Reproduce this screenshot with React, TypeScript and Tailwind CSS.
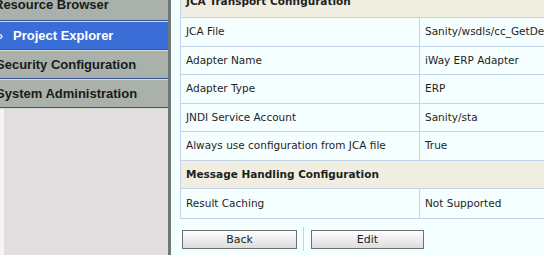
import React from "react";

const font = { fontFamily: '"DejaVu Sans", Verdana, sans-serif' };
const navFont = { fontFamily: '"Liberation Sans", Arial, sans-serif' };

function NavItem({
  label,
  active,
  h,
  offset,
  arrow,
}: {
  label: string;
  active?: boolean;
  h: string;
  offset: string;
  arrow?: boolean;
}) {
  return (
    <>
      <div
        className={`${h} flex items-center whitespace-nowrap font-bold text-[13px] ${
          active ? "bg-[#3b6dd6] text-white" : "bg-[#a9b1aa] text-[#1a1a1a]"
        }`}
        style={navFont}
      >
        {arrow && <span className="ml-[-1px] text-[12px] text-[#dfe8ff]">›</span>}
        <span className={offset}>{label}</span>
      </div>
      <div className="h-px bg-[#3a5594]" />
      <div className="h-px bg-[#d6dcdc]" />
    </>
  );
}

const rows: { k: string; v?: string; header?: boolean; h: string }[] = [
  { k: "JCA File", v: "Sanity/wsdls/cc_GetDetails", h: "h-[29px]" },
  { k: "Adapter Name", v: "iWay ERP Adapter", h: "h-[28px]" },
  { k: "Adapter Type", v: "ERP", h: "h-[29px]" },
  { k: "JNDI Service Account", v: "Sanity/sta", h: "h-[28px]" },
  { k: "Always use configuration from JCA file", v: "True", h: "h-[29px]" },
  { k: "Message Handling Configuration", header: true, h: "h-[28px]" },
  { k: "Result Caching", v: "Not Supported", h: "h-[29px]" },
];

export default function App() {
  return (
    <div className="w-[544px] h-[255px] overflow-hidden flex bg-[#f4ffff]" style={font}>
      <div className="w-[168px] h-full bg-[#e2dddf] overflow-hidden flex flex-col">
        <div className="-mt-[11px] flex flex-col shrink-0">
          <NavItem label="Resource Browser" h="h-[31px]" offset="ml-[-6px]" />
          <NavItem label="Project Explorer" active arrow h="h-[27px]" offset="ml-[10px]" />
          <NavItem label="Security Configuration" h="h-[27px]" offset="ml-[-4px]" />
          <NavItem label="System Administration" h="h-[27px]" offset="ml-[-4px]" />
        </div>
        <div className="flex-1 flex">
          <div className="w-[4px] bg-[#f3f5f5]" />
          <div className="flex-1" />
        </div>
      </div>
      <div className="w-[3px] h-full bg-[#6e7a78]" />
      <div className="flex-1 h-full overflow-hidden pl-[9px]">
        <div className="w-[400px] -mt-[15px] border border-[#c3d3ea] bg-[#f6ffff] text-[10.5px] text-[#1e1e1e]">
          <div className="h-[32px] flex items-center px-[5px] bg-[#efeee0] border-b border-[#c3d3ea] font-bold whitespace-nowrap">
            JCA Transport Configuration
          </div>
          {rows.map((r, i) =>
            r.header ? (
              <div
                key={i}
                className={`${r.h} flex items-center px-[5px] bg-[#efeee0] border-b border-[#c3d3ea] font-bold whitespace-nowrap`}
              >
                {r.k}
              </div>
            ) : (
              <div key={i} className={`${r.h} flex border-b border-[#c3d3ea] last:border-b-0`}>
                <div className="w-[239px] flex items-center px-[5px] border-r border-[#c3d3ea] whitespace-nowrap overflow-hidden">
                  {r.k}
                </div>
                <div className="flex-1 flex items-center px-[5px] whitespace-nowrap overflow-hidden">{r.v}</div>
              </div>
            )
          )}
        </div>
        <div className="mt-[8px] flex items-center">
          <button className="ml-[2px] w-[115px] h-[19px] border border-[#6f7070] bg-gradient-to-b from-white to-[#dcdcdc] text-[11px] text-[#1e1e1e] leading-none">
            Back
          </button>
          <div className="mx-[6px] w-px h-[24px] bg-[#c8d4e4]" />
          <button className="ml-[1px] w-[113px] h-[19px] border border-[#6f7070] bg-gradient-to-b from-white to-[#dcdcdc] text-[11px] text-[#1e1e1e] leading-none">
            Edit
          </button>
        </div>
      </div>
    </div>
  );
}
